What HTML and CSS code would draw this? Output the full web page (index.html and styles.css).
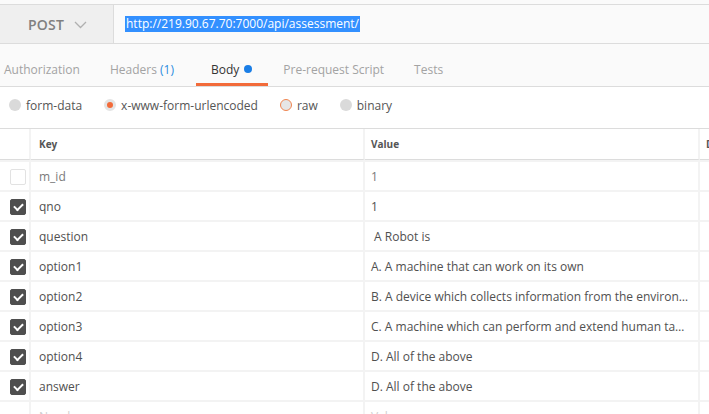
FILE: index.html
```html
<!DOCTYPE html>
<html>
<head>
<meta charset="utf-8">
<link rel="stylesheet" href="styles.css">
</head>
<body>
<div class="page">
  <div class="urlbar">
    <div class="method">
      <span class="method-name">POST</span>
      <svg class="chev" width="13" height="8" viewBox="0 0 13 8"><path d="M1 1 L6.5 6.5 L12 1" fill="none" stroke="#b0b0b0" stroke-width="1.3"/></svg>
    </div>
    <div class="url"><span class="sel">http://219.90.67.70:7000/api/assessment/</span></div>
  </div>
  <div class="tabs">
    <div class="tab first">Authorization</div>
    <div class="tab headers">Headers&nbsp;<span class="count">(1)</span></div>
    <div class="tab active">Body <span class="dot"></span></div>
    <div class="tab">Pre-request Script</div>
    <div class="tab">Tests</div>
  </div>
  <div class="modes">
    <label class="mode"><span class="radio"></span>form-data</label>
    <label class="mode"><span class="radio on"></span>x-www-form-urlencoded</label>
    <label class="mode"><span class="radio hover"></span>raw</label>
    <label class="mode"><span class="radio"></span>binary</label>
  </div>
  <div class="table">
    <div class="row head">
      <div class="c chk"></div>
      <div class="c key">Key</div>
      <div class="c val">Value</div>
      <div class="c desc">D</div>
    </div>
    <div class="row off">
      <div class="c chk"><span class="box"></span></div>
      <div class="c key">m_id</div>
      <div class="c val">1</div>
      <div class="c desc"></div>
    </div>
    <div class="row">
      <div class="c chk"><span class="box checked"></span></div>
      <div class="c key">qno</div>
      <div class="c val">1</div>
      <div class="c desc"></div>
    </div>
    <div class="row">
      <div class="c chk"><span class="box checked"></span></div>
      <div class="c key">question</div>
      <div class="c val">&nbsp;A Robot is</div>
      <div class="c desc"></div>
    </div>
    <div class="row">
      <div class="c chk"><span class="box checked"></span></div>
      <div class="c key">option1</div>
      <div class="c val">A. A machine that can work on its own</div>
      <div class="c desc"></div>
    </div>
    <div class="row">
      <div class="c chk"><span class="box checked"></span></div>
      <div class="c key">option2</div>
      <div class="c val">B. A device which collects information from the environment</div>
      <div class="c desc"></div>
    </div>
    <div class="row">
      <div class="c chk"><span class="box checked"></span></div>
      <div class="c key">option3</div>
      <div class="c val">C. A machine which can perform and extend human tasks</div>
      <div class="c desc"></div>
    </div>
    <div class="row">
      <div class="c chk"><span class="box checked"></span></div>
      <div class="c key">option4</div>
      <div class="c val">D. All of the above</div>
      <div class="c desc"></div>
    </div>
    <div class="row">
      <div class="c chk"><span class="box checked"></span></div>
      <div class="c key">answer</div>
      <div class="c val">D. All of the above</div>
      <div class="c desc"></div>
    </div>
    <div class="row new">
      <div class="c chk"></div>
      <div class="c key">New key</div>
      <div class="c val">Value</div>
      <div class="c desc"></div>
    </div>
  </div>
</div>
</body>
</html>
```

FILE: styles.css
```css
html, body {
  margin: 0;
  padding: 0;
  background: #fafafa;
  overflow: hidden;
}
.page {
  width: 709px;
  height: 414px;
  overflow: hidden;
  padding-top: 4px;
  font-family: "Open Sans", "Liberation Sans", sans-serif;
  font-size: 12px;
  color: #505050;
}
.urlbar {
  display: flex;
  height: 38px;
  border-top: 1px solid #dcdcdc;
  border-bottom: 1px solid #dcdcdc;
  background: #fafafa;
}
.method {
  width: 114px;
  background: #efefef;
  border-right: 1px solid #dcdcdc;
  display: flex;
  align-items: center;
  box-sizing: border-box;
  padding-left: 28px;
}
.method-name {
  font-size: 14px;
  font-weight: 600;
  color: #808080;
  letter-spacing: 0.2px;
}
.chev {
  margin-left: 10px;
  margin-top: 1px;
}
.url {
  display: flex;
  align-items: center;
  padding-left: 11px;
  font-size: 12px;
}
.sel {
  background: #3390ff;
  color: #fff;
  line-height: 16px;
  padding: 0 1px;
}
.tabs {
  display: flex;
  height: 42px;
  border-bottom: 1px solid #dcdcdc;
  background: #fafafa;
  margin-left: -11px;
}
.tab {
  padding: 11px 15px 0;
  display: flex;
  align-items: center;
  color: #a3a3a3;
  font-size: 12px;
  box-sizing: border-box;
  border-bottom: 3px solid transparent;
}
.tab.headers {
  padding-right: 22px;
}
.tab .count {
  color: #2a8ce0;
}
.tab.active {
  color: #333;
  border-bottom-color: #f26b3a;
  padding-right: 16px;
}
.dot {
  width: 8px;
  height: 8px;
  border-radius: 50%;
  background: #1a7ee6;
  margin-left: 5px;
}
.modes {
  display: flex;
  height: 42px;
  align-items: center;
  background: #fff;
  border-bottom: 1px solid #dcdcdc;
  padding: 0 0 4px 9px;
  box-sizing: border-box;
  gap: 22px;
}
.mode {
  display: flex;
  align-items: center;
  color: #555;
  font-size: 12px;
  gap: 5px;
}
.radio {
  width: 12px;
  height: 12px;
  border-radius: 50%;
  background: #dadada;
  box-sizing: border-box;
  margin-top: -1px;
}
.radio.on {
  background: #f26b3a;
  border: 3px solid #e4e4e4;
}
.radio.hover {
  background: #e6e6e6;
  border: 1.5px solid #f0844f;
}
.table {
  background: #fff;
}
.row {
  display: grid;
  grid-template-columns: 31px 334px 335px 1fr;
  height: 30px;
}
.c {
  display: flex;
  align-items: center;
  box-sizing: border-box;
  border-right: 2px solid #f3f3f3;
  border-top: 2px solid #f3f3f3;
  white-space: nowrap;
  overflow: hidden;
  text-overflow: ellipsis;
  min-width: 0;
  padding-top: 1px;
}
.c.key {
  padding-left: 8px;
}
.c.val {
  padding-left: 6px;
  padding-right: 8px;
  display: block;
  line-height: 27px;
}
.c.desc {
  padding-left: 6px;
  border-right: none;
}
.row.head {
  height: 31px;
}
.row.head .c {
  font-size: 10px;
  font-weight: 700;
  color: #555;
  border-top: none;
  border-bottom: 1px solid #dcdcdc;
  line-height: 29px;
  padding-top: 1px;
}
.c.chk {
  padding-left: 10px;
}
.box {
  width: 16px;
  height: 16px;
  border-radius: 2px;
  box-sizing: border-box;
  border: 1px solid #e2e2e2;
  background: #fff;
  display: flex;
  align-items: center;
  justify-content: center;
}
.box.checked {
  background: #4f4f4f;
  border-color: #4f4f4f;
}
.box.checked::after {
  content: "";
  width: 7px;
  height: 4px;
  border-left: 2px solid #fff;
  border-bottom: 2px solid #fff;
  transform: rotate(-45deg);
  margin-top: -2px;
}
.row.off .c.key, .row.off .c.val {
  color: #7a7a7a;
}
.row.new .c.key, .row.new .c.val {
  color: #cfcfcf;
}
```
